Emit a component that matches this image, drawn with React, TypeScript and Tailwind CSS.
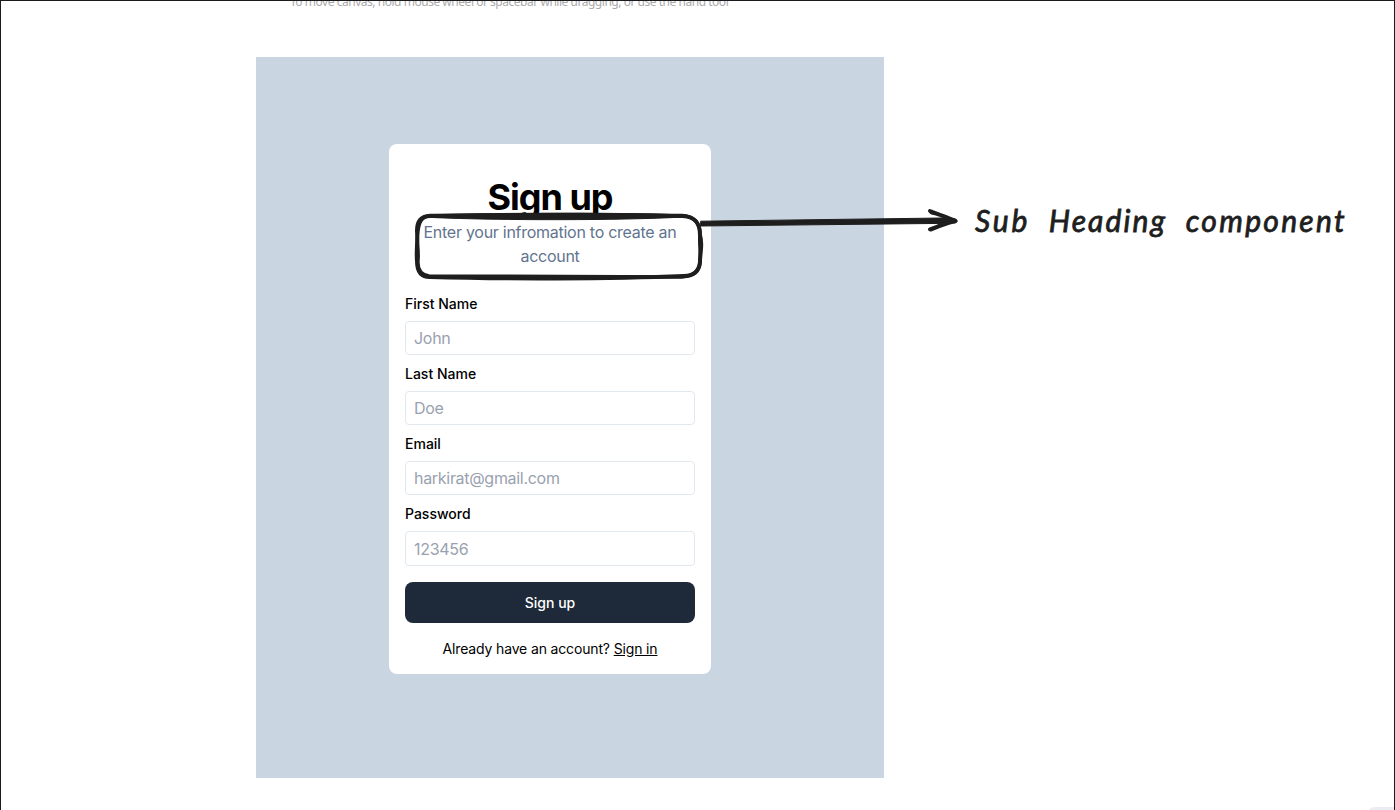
const fields = [
  { label: "First Name", placeholder: "John" },
  { label: "Last Name", placeholder: "Doe" },
  { label: "Email", placeholder: "harkirat@gmail.com" },
  { label: "Password", placeholder: "123456" },
];

function Field({ label, placeholder }: { label: string; placeholder: string }) {
  return (
    <label className="block h-[70.2px]">
      <span className="flex h-9 items-center pt-[1.5px] text-[14px] leading-5 font-medium text-black">{label}</span>
      <input
        placeholder={placeholder}
        className="block h-[34.2px] w-full rounded border border-slate-200 bg-white px-2 text-[16px] tracking-[-0.3px] placeholder:text-gray-400"
      />
    </label>
  );
}

function SignupCard() {
  return (
    <div className="h-[530px] w-[322px] rounded-lg bg-white px-4 pt-[33px] text-center">
      <h1 className="text-[36px] leading-10 font-bold tracking-[-1px] text-black">Sign up</h1>
      <p className="mt-[2.5px] px-2 text-[16px] leading-[24.2px] tracking-[-0.27px] text-slate-500">
        Enter your infromation to create an account
      </p>
      <div className="mt-[17px] text-left">
        {fields.map((f) => (
          <Field key={f.label} {...f} />
        ))}
      </div>
      <button className="mt-4 block h-[41px] w-full rounded-lg bg-gray-800 text-[14px] font-medium text-white">
        Sign up
      </button>
      <div className="mt-4 text-[14px] leading-5 tracking-[-0.15px] text-black">
        Already have an account? <a className="underline">Sign in</a>
      </div>
    </div>
  );
}

function Annotation() {
  return (
    <>
      <svg className="pointer-events-none absolute inset-0" width="1395" height="810" fill="none" stroke="#1e1e1e" strokeLinecap="round" strokeLinejoin="round">
        <path
          strokeWidth="4"
          d="M430 216C500 215 620 214 683 216C696 217 700 224 700 235C703 245 700 252 700 262C699 272 693 276 684 276C610 279 500 279 430 277C421 277 417 272 417 261C416 250 418 241 417 231C417 221 421 216 430 216Z"
        />
        <path
          strokeWidth="3.5"
          d="M430 215.5C500 217 620 218 682 215.5C694 216 699 222 700 232C699 246 701 251 700 261C700 271 694 276 682 277C600 276 510 277 429 276C422 275 417 271 418 260C419 249 416 241 418 231C419 221 422 217 430 215.5Z"
        />
        <path fill="#1e1e1e" strokeWidth="1" d="M432 214.5C500 213 620 212.5 684 215L684 217C620 220.5 500 220.5 432 217.5Z" />
        <path fill="#1e1e1e" strokeWidth="1" d="M701 221.2L942 218L955 219C958 220 958 222 955 223L942 223.4L701 226Z" />
        <path strokeWidth="4" d="M930 211L955 220.5L930 229.3M931 212C940 215 947 217 955 221C946 223 938 226 931 229.5" />
      </svg>
      <div className="absolute top-[200px] left-[975px] flex h-10 w-[372px] items-center justify-between font-['Lato',cursive] text-[30px] leading-10 whitespace-nowrap text-[#1e1e1e] italic [-webkit-text-stroke:0.8px_#1e1e1e]">
        <span className="tracking-[2.8px]">Sub</span>
        <span className="tracking-[2.1px]">Heading</span>
        <span className="tracking-[2.3px]">component</span>
      </div>
    </>
  );
}

export default function App() {
  return (
    <div className="relative h-[810px] w-[1395px] overflow-hidden border-t border-r border-l border-[#1d1a1e] bg-white font-['Inter',sans-serif]">
      <div className="flex h-[56px] items-start pl-[289px]">
        <p className="-mt-[7px] font-['Noto_Sans',sans-serif] text-[12px] leading-4 tracking-[-0.47px] whitespace-nowrap text-[#ababab]">
          To move canvas, hold mouse wheel or spacebar while dragging, or use the hand tool
        </p>
      </div>
      <main className="ml-[254.5px] h-[721px] w-[628.5px] bg-slate-300 pt-[87px] pl-[133.5px]">
        <SignupCard />
      </main>
      <div className="absolute -inset-px">
        <Annotation />
        <div className="absolute top-[807px] left-[1367px] h-8 w-7 rounded-tl-lg bg-[#ececf4]" />
      </div>
    </div>
  );
}
